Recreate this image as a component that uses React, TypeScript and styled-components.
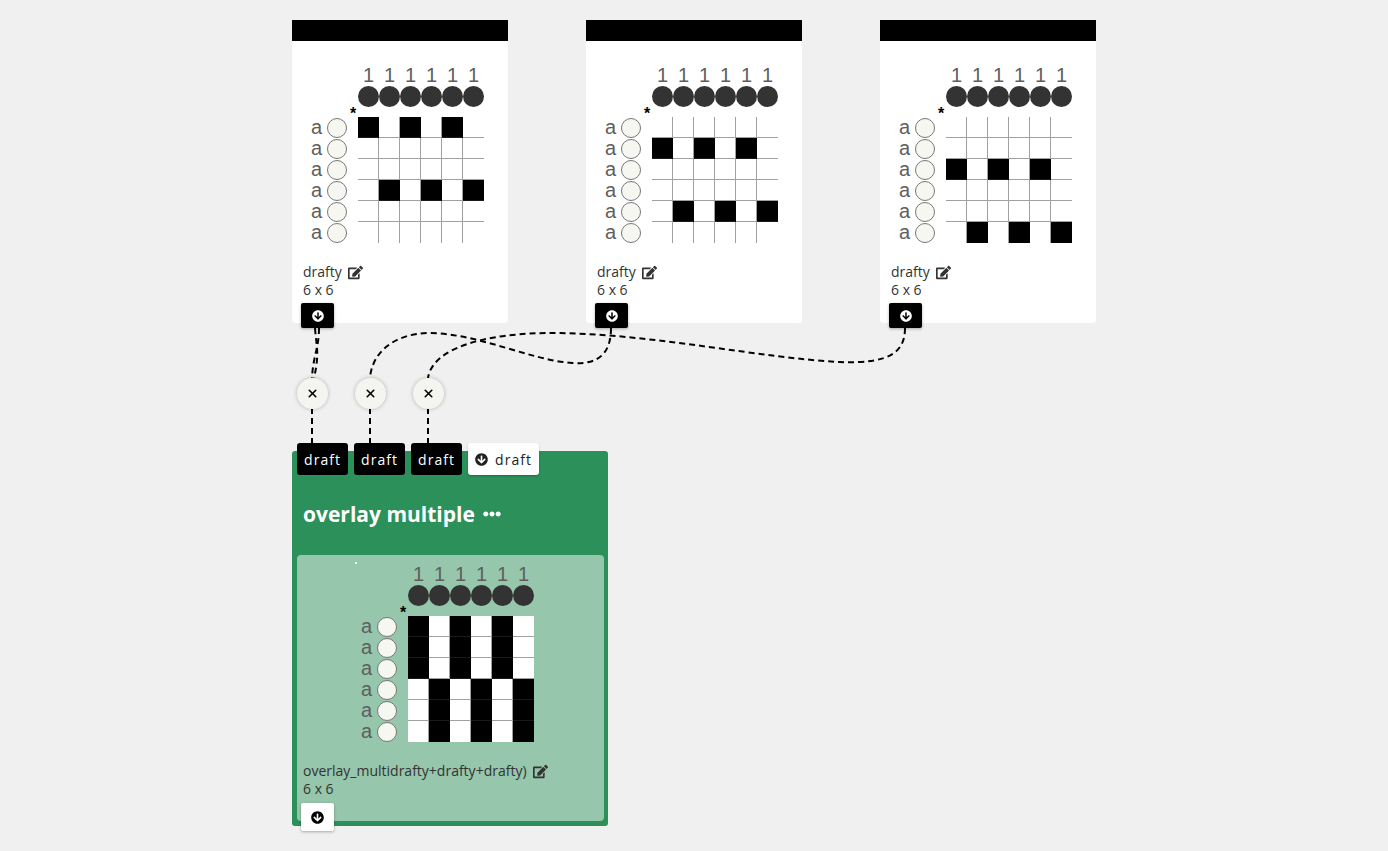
import React from 'react';
import styled, { createGlobalStyle } from 'styled-components';
import { FaEdit, FaArrowCircleDown, FaEllipsisH } from 'react-icons/fa';
import { X } from 'lucide-react';

type Grid = boolean[][];

const SIZE = 6;

const makeGrid = (fill: (r: number, c: number) => boolean): Grid =>
  Array.from({ length: SIZE }, (_, r) => Array.from({ length: SIZE }, (_, c) => fill(r, c)));

const even = (c: number) => c % 2 === 0;

const drafts = [
  { x: 292, y: 20, grid: makeGrid((r, c) => (r === 0 && even(c)) || (r === 3 && !even(c))) },
  { x: 586, y: 20, grid: makeGrid((r, c) => (r === 1 && even(c)) || (r === 4 && !even(c))) },
  { x: 880, y: 20, grid: makeGrid((r, c) => (r === 2 && even(c)) || (r === 5 && !even(c))) },
];

const overlay = makeGrid((r, c) => (r < 3 ? even(c) : !even(c)));

const connections = [
  'M319,328 C319,348 313,356 312,378',
  'M315,328 C316,345 320,352 314,378',
  'M611,328 C611,352 600,365 572,363 C530,360 480,334 430,333 C395,333 372,352 370,378',
  'M905,328 C905,352 890,364 840,362 C760,358 660,335 560,333 C480,332 432,350 428,378',
  'M312,408 L312,443',
  'M370,408 L370,443',
  'M428,408 L428,443',
];

const handles = [312, 370, 428];

export default function App() {
  return (
    <>
      <GlobalStyle />
      <Canvas>
        <Wires width="1388" height="851">
          {connections.map((d, i) => (
            <path key={i} d={d} />
          ))}
        </Wires>

        {drafts.map((d, i) => (
          <DraftNode key={i} $x={d.x} $y={d.y}>
            <NodeBar />
            <NodeBody>
              <DraftView grid={d.grid} offset={8} />
              <Meta>
                <NameRow>
                  drafty <FaEdit size={15} />
                </NameRow>
                <div>6 x 6</div>
              </Meta>
              <Outlet>
                <FaArrowCircleDown size={12} />
              </Outlet>
            </NodeBody>
          </DraftNode>
        ))}

        {handles.map((x) => (
          <RemoveHandle key={x} $x={x} $y={393}>
            <X size={13} strokeWidth={3} />
          </RemoveHandle>
        ))}

        <OpNode $x={292} $y={443}>
          <Inlets>
            <Inlet>draft</Inlet>
            <Inlet>draft</Inlet>
            <Inlet>draft</Inlet>
            <Inlet $open>
              <FaArrowCircleDown size={13} />
              draft
            </Inlet>
          </Inlets>
          <OpBody>
            <OpTitle>
              overlay multiple <FaEllipsisH size={18} />
            </OpTitle>
            <Panel>
              <Speck />
              <DraftView grid={overlay} offset={58} />
              <Meta>
                <NameRow>
                  overlay_multidrafty+drafty+drafty) <FaEdit size={15} />
                </NameRow>
                <div>6 x 6</div>
              </Meta>
              <Outlet $light>
                <FaArrowCircleDown size={13} />
              </Outlet>
            </Panel>
          </OpBody>
        </OpNode>
      </Canvas>
    </>
  );
}

function DraftView({ grid, offset }: { grid: Grid; offset: number }) {
  return (
    <Viewer $offset={offset}>
      {grid[0].map((_, c) => (
        <WarpNumber key={`n${c}`} $col={c + 4}>
          1
        </WarpNumber>
      ))}
      {grid[0].map((_, c) => (
        <WarpDot key={`w${c}`} $col={c + 4} />
      ))}
      <Origin>*</Origin>
      {grid.map((row, r) => (
        <React.Fragment key={r}>
          <RowLabel $row={r + 4}>a</RowLabel>
          <WeftDot $row={r + 4} />
          {row.map((on, c) => (
            <Cell key={c} $row={r + 4} $col={c + 4} $on={on} $right={c < SIZE - 1} $bottom={r < SIZE - 1} />
          ))}
        </React.Fragment>
      ))}
    </Viewer>
  );
}

const GlobalStyle = createGlobalStyle`
  html, body {
    margin: 0;
    padding: 0;
    background: #f0f0f0;
  }
  body {
    font-family: "Open Sans", "Noto Sans", sans-serif;
    color: #333;
  }
`;

const Canvas = styled.div`
  position: relative;
  width: 1388px;
  height: 851px;
  overflow: hidden;
  background: #f0f0f0;
`;

const Wires = styled.svg`
  position: absolute;
  left: 0;
  top: 0;
  pointer-events: none;

  path {
    fill: none;
    stroke: #000;
    stroke-width: 2;
    stroke-dasharray: 6 4;
  }
`;

const Node = styled.div<{ $x: number; $y: number }>`
  position: absolute;
  left: ${(p) => p.$x}px;
  top: ${(p) => p.$y}px;
`;

const DraftNode = styled(Node)`
  width: 216px;
  display: flex;
  flex-direction: column;
`;

const NodeBar = styled.div`
  height: 21px;
  background: #000;
`;

const NodeBody = styled.div`
  display: flex;
  flex-direction: column;
  align-items: flex-start;
  padding: 24px 0 0 9px;
  background: #fff;
  border-radius: 0 0 4px 4px;
`;

const Viewer = styled.div<{ $offset: number }>`
  display: grid;
  grid-template-columns: 18px 21px 10px repeat(6, 21px);
  grid-template-rows: 21px 21px 10px repeat(6, 21px);
  margin-left: ${(p) => p.$offset}px;
  font-family: "Liberation Sans", Arial, sans-serif;
`;

const WarpNumber = styled.div<{ $col: number }>`
  grid-row: 1;
  grid-column: ${(p) => p.$col};
  font-size: 20px;
  line-height: 21px;
  text-align: center;
  color: #5e5e5e;
`;

const WarpDot = styled.div<{ $col: number }>`
  grid-row: 2;
  grid-column: ${(p) => p.$col};
  width: 21px;
  height: 21px;
  border-radius: 50%;
  background: #333;
`;

const Origin = styled.div`
  grid-row: 3;
  grid-column: 3;
  font-size: 16px;
  font-weight: 700;
  line-height: 14px;
  text-align: center;
  color: #000;
`;

const RowLabel = styled.div<{ $row: number }>`
  grid-row: ${(p) => p.$row};
  grid-column: 1;
  padding-right: 5px;
  font-size: 20px;
  line-height: 21px;
  text-align: right;
  color: #5e5e5e;
`;

const WeftDot = styled.div<{ $row: number }>`
  grid-row: ${(p) => p.$row};
  grid-column: 2;
  align-self: center;
  width: 20px;
  height: 20px;
  box-sizing: border-box;
  border: 1px solid #777;
  border-radius: 50%;
  background: #f7f7f2;
`;

const Cell = styled.div<{ $row: number; $col: number; $on: boolean; $right: boolean; $bottom: boolean }>`
  grid-row: ${(p) => p.$row};
  grid-column: ${(p) => p.$col};
  box-sizing: border-box;
  background: ${(p) => (p.$on ? '#000' : '#fff')};
  border-right: ${(p) => (p.$right ? `1px solid ${p.$on ? '#000' : '#a0a0a0'}` : 'none')};
  border-bottom: ${(p) => (p.$bottom ? `1px solid ${p.$on ? '#1a1a1a' : '#a0a0a0'}` : 'none')};
`;

const Meta = styled.div`
  margin: 20px 0 0 2px;
  font-size: 14px;
  line-height: 18px;
  color: #333;
`;

const NameRow = styled.div`
  display: flex;
  align-items: center;
  gap: 6px;
`;

const Outlet = styled.button<{ $light?: boolean }>`
  display: flex;
  align-items: center;
  justify-content: center;
  width: 33px;
  height: ${(p) => (p.$light ? 28 : 25)}px;
  margin: ${(p) => (p.$light ? '5px 0 -10px 0' : '4px 0 -5px 0')};
  padding: 0;
  border: none;
  border-radius: 2px;
  background: ${(p) => (p.$light ? '#fff' : '#000')};
  color: ${(p) => (p.$light ? '#000' : '#fff')};
  box-shadow: 0 1px 3px rgba(0, 0, 0, 0.3);
`;

const RemoveHandle = styled.button<{ $x: number; $y: number }>`
  position: absolute;
  left: ${(p) => p.$x - 15}px;
  top: ${(p) => p.$y - 15}px;
  display: flex;
  align-items: center;
  justify-content: center;
  width: 31px;
  height: 31px;
  padding: 0;
  border: none;
  border-radius: 50%;
  background: #f4f4f0;
  color: #000;
  box-shadow: 0 0 4px rgba(0, 0, 0, 0.25);
`;

const OpNode = styled(Node)`
  width: 316px;
  display: flex;
  flex-direction: column;
`;

const Inlets = styled.div`
  position: relative;
  z-index: 1;
  display: flex;
  gap: 6px;
  padding-left: 5px;
`;

const Inlet = styled.div<{ $open?: boolean }>`
  display: flex;
  align-items: center;
  justify-content: center;
  gap: 7px;
  width: ${(p) => (p.$open ? 71 : 51)}px;
  height: 32px;
  box-sizing: border-box;
  border-radius: 3px;
  background: ${(p) => (p.$open ? '#fff' : '#000')};
  color: ${(p) => (p.$open ? '#222' : '#fff')};
  font-size: 14px;
  letter-spacing: 1px;
  box-shadow: ${(p) => (p.$open ? '0 1px 2px rgba(0,0,0,0.25)' : 'none')};
`;

const OpBody = styled.div`
  margin-top: -24px;
  padding: 0 4px 5px 5px;
  border-radius: 3px;
  background: #2b905a;
`;

const OpTitle = styled.div`
  display: flex;
  align-items: center;
  gap: 8px;
  padding: 49px 0 0 6px;
  font-size: 21px;
  font-weight: 700;
  line-height: 28px;
  color: #fff;
`;

const Panel = styled.div`
  position: relative;
  display: flex;
  flex-direction: column;
  align-items: flex-start;
  margin-top: 27px;
  padding: 9px 0 0 4px;
  border-radius: 4px;
  background: #96c6ab;
`;

const Speck = styled.span`
  position: absolute;
  left: 58px;
  top: 7px;
  width: 2px;
  height: 2px;
  background: #fff;
`;
